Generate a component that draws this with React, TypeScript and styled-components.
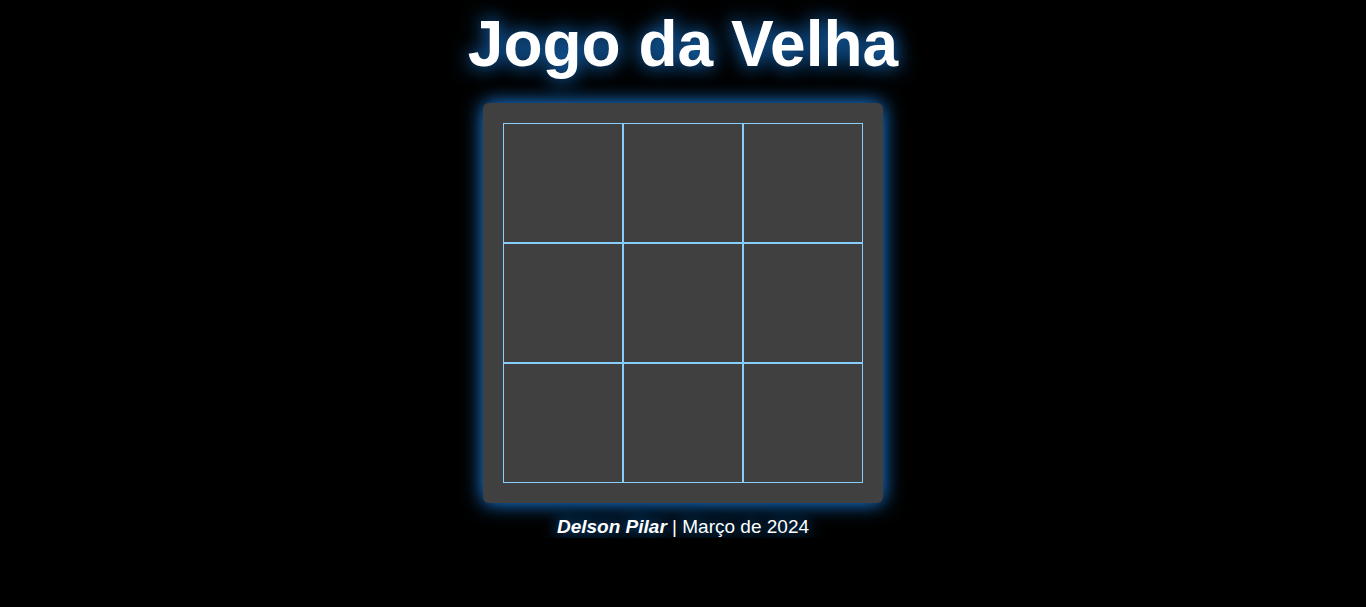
import React, { useState } from 'react';
import styled, { createGlobalStyle } from 'styled-components';

const GlobalStyle = createGlobalStyle`
  html, body {
    margin: 0;
    padding: 0;
    background: #000;
    font-family: 'Liberation Sans', Arial, sans-serif;
  }
`;

const Page = styled.div`
  display: flex;
  flex-direction: column;
  align-items: center;
  padding-top: 7px;
`;

const Title = styled.h1`
  margin: 0 0 22px;
  font-size: 64px;
  font-weight: bold;
  line-height: 74px;
  color: #fff;
  text-shadow: 0 0 20px #1e90ff;
`;

const Board = styled.div`
  width: 400px;
  height: 400px;
  box-sizing: border-box;
  padding: 20px;
  background: #404040;
  border-radius: 6px;
  box-shadow: 0 0 20px #1e90ff;
  display: grid;
  grid-template-columns: repeat(3, 120px);
  grid-template-rows: repeat(3, 120px);
`;

const Cell = styled.button`
  box-sizing: border-box;
  width: 120px;
  height: 120px;
  margin: 0;
  padding: 0;
  background: #404040;
  border: 1px solid #87cefa;
  color: #fff;
  font-family: 'Liberation Sans', Arial, sans-serif;
  font-size: 64px;
  font-weight: bold;
  cursor: pointer;
`;

const Footer = styled.p`
  margin: 13px 0 0;
  font-size: 19px;
  color: #fff;
  text-shadow: 0 0 15px #1e90ff;
`;

const Author = styled.strong`
  font-style: italic;
`;

export default function App() {
  const [cells, setCells] = useState<string[]>(Array(9).fill(''));
  const [turn, setTurn] = useState<'X' | 'O'>('X');

  const play = (i: number) => {
    if (cells[i]) return;
    const next = [...cells];
    next[i] = turn;
    setCells(next);
    setTurn(turn === 'X' ? 'O' : 'X');
  };

  return (
    <>
      <GlobalStyle />
      <Page>
        <Title>Jogo da Velha</Title>
        <Board>
          {cells.map((c, i) => (
            <Cell key={i} onClick={() => play(i)}>{c}</Cell>
          ))}
        </Board>
        <Footer>
          <Author>Delson Pilar</Author> | Março de 2024
        </Footer>
      </Page>
    </>
  );
}
